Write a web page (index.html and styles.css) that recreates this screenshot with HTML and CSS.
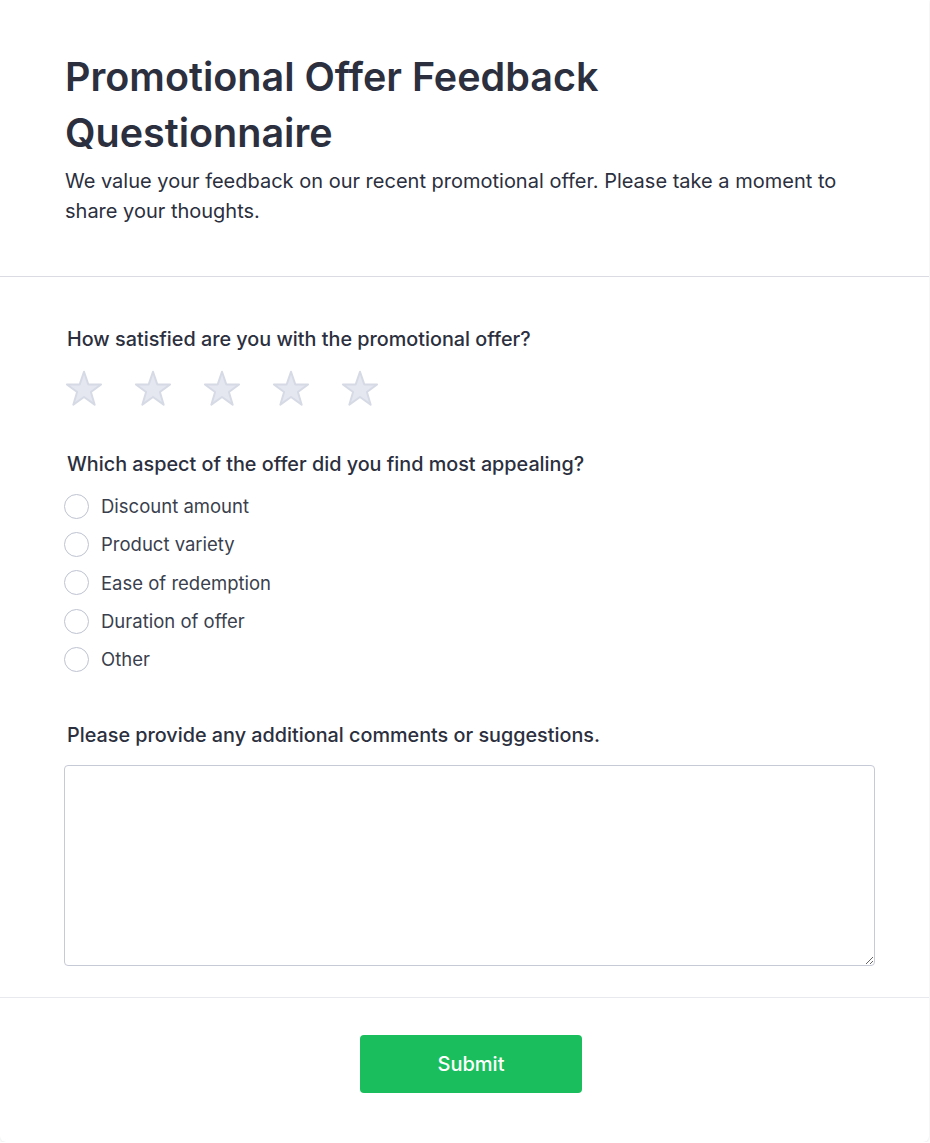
FILE: index.html
```html
<!DOCTYPE html>
<html lang="en">
<head>
<meta charset="utf-8">
<title>Promotional Offer Feedback Questionnaire</title>
<link rel="stylesheet" href="styles.css">
</head>
<body>
<div class="card">
  <header class="header">
    <h1 class="title">Promotional Offer Feedback Questionnaire</h1>
    <p class="subtitle">We value your feedback on our recent promotional offer. Please take a moment to share your thoughts.</p>
  </header>
  <form class="form">
    <div class="question">
      <label class="q-label">How satisfied are you with the promotional offer?</label>
      <div class="stars">
        <svg class="star" viewBox="0 0 40 38" width="40" height="38"><path d="M20 1.8 L24.27 14.43 L37.07 14.43 L26.9 22.04 L30.67 34.67 L20 27.06 L9.33 34.67 L13.1 22.04 L2.93 14.43 L15.73 14.43 Z"/></svg>
        <svg class="star" viewBox="0 0 40 38" width="40" height="38"><path d="M20 1.8 L24.27 14.43 L37.07 14.43 L26.9 22.04 L30.67 34.67 L20 27.06 L9.33 34.67 L13.1 22.04 L2.93 14.43 L15.73 14.43 Z"/></svg>
        <svg class="star" viewBox="0 0 40 38" width="40" height="38"><path d="M20 1.8 L24.27 14.43 L37.07 14.43 L26.9 22.04 L30.67 34.67 L20 27.06 L9.33 34.67 L13.1 22.04 L2.93 14.43 L15.73 14.43 Z"/></svg>
        <svg class="star" viewBox="0 0 40 38" width="40" height="38"><path d="M20 1.8 L24.27 14.43 L37.07 14.43 L26.9 22.04 L30.67 34.67 L20 27.06 L9.33 34.67 L13.1 22.04 L2.93 14.43 L15.73 14.43 Z"/></svg>
        <svg class="star" viewBox="0 0 40 38" width="40" height="38"><path d="M20 1.8 L24.27 14.43 L37.07 14.43 L26.9 22.04 L30.67 34.67 L20 27.06 L9.33 34.67 L13.1 22.04 L2.93 14.43 L15.73 14.43 Z"/></svg>
      </div>
    </div>
    <div class="question q-options">
      <label class="q-label">Which aspect of the offer did you find most appealing?</label>
      <div class="options">
        <label class="option"><input type="radio" name="aspect" class="radio"><span>Discount amount</span></label>
        <label class="option"><input type="radio" name="aspect" class="radio"><span>Product variety</span></label>
        <label class="option"><input type="radio" name="aspect" class="radio"><span>Ease of redemption</span></label>
        <label class="option"><input type="radio" name="aspect" class="radio"><span>Duration of offer</span></label>
        <label class="option"><input type="radio" name="aspect" class="radio"><span>Other</span></label>
      </div>
    </div>
    <div class="question q-comments">
      <label class="q-label" for="comments">Please provide any additional comments or suggestions.</label>
      <textarea id="comments" class="textarea"></textarea>
    </div>
  </form>
  <footer class="footer">
    <button type="button" class="submit">Submit</button>
  </footer>
</div>
</body>
</html>
```
FILE: styles.css
```css
* { box-sizing: border-box; }
html, body { margin: 0; padding: 0; background: #ffffff; }
body { font-family: Inter, "Noto Sans", sans-serif; color: #2d3142; }

.card {
  width: 929px;
  height: 1142px;
  background: #fff;
  border-radius: 0 0 6px 6px;
  box-shadow: 0 1px 3px rgba(60, 64, 110, 0.12);
  display: flex;
  flex-direction: column;
}

.header {
  padding: 49px 54px 50px 65px;
  border-bottom: 1px solid #dadbe3;
}
.title {
  margin: 0;
  max-width: 600px;
  font-size: 39.5px;
  font-weight: 600;
  line-height: 56px;
  color: #2b2f3e;
}
.subtitle {
  margin: 5px 0 0;
  max-width: 800px;
  font-size: 20px;
  line-height: 30px;
  color: #2b2f3e;
}

.form {
  padding: 48px 54px 31px 64px;
  border-bottom: 1px solid #e8e8ef;
  display: flex;
  flex-direction: column;
}
.question { display: flex; flex-direction: column; }
.q-label {
  font-size: 19.8px;
  font-weight: 500;
  line-height: 28px;
  color: #2b2f3e;
  padding-left: 3px;
}
.stars {
  display: flex;
  gap: 29px;
  margin-top: 17px;
}
.star { display: block; }
.star path {
  fill: #e4e7f0;
  stroke: #d6dae5;
  stroke-width: 2;
  stroke-linejoin: round;
}

.q-options { margin-top: 42px; }
.options {
  display: flex;
  flex-direction: column;
  gap: 10px;
  margin-top: 14px;
}
.option {
  display: flex;
  align-items: center;
  gap: 12px;
  height: 28.3px;
  font-size: 18.5px;
  color: #3a3f4e;
}
.radio {
  appearance: none;
  -webkit-appearance: none;
  margin: 0;
  width: 25px;
  height: 25px;
  border: 1.5px solid #bec3d0;
  border-radius: 50%;
  background: #fff;
  flex: none;
}

.q-comments { margin-top: 48px; }
.textarea {
  margin-top: 16px;
  width: 100%;
  height: 201px;
  border: 1px solid #c6cad6;
  border-radius: 4px;
  font-family: inherit;
  font-size: 16px;
  padding: 8px 12px;
  resize: vertical;
}

.footer {
  display: flex;
  justify-content: center;
  padding: 37px 0 0 13px;
}
.submit {
  width: 222px;
  height: 58px;
  border: none;
  border-radius: 4px;
  background: #1abe5c;
  color: #fff;
  font-family: inherit;
  font-size: 20px;
  font-weight: 500;
}
```
